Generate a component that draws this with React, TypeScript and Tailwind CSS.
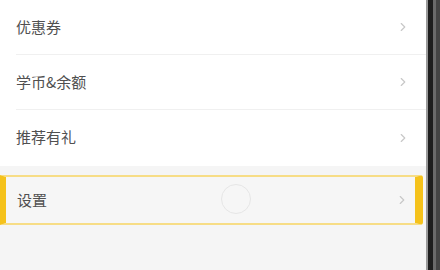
import { ChevronRight } from "lucide-react"

const items = ["优惠券", "学币&余额", "推荐有礼"]

function Row({ label, last }: { label: string; last?: boolean }) {
  return (
    <div className="pl-[16px]">
      <div
        className={`flex h-[55px] items-center justify-between pr-[16px] ${
          last ? "" : "border-b border-[#f0f0f0]"
        }`}
      >
        <span className="text-[15px] text-[#505050]">{label}</span>
        <ChevronRight className="h-[14px] w-[14px] text-[#c8c8c8]" strokeWidth={2} />
      </div>
    </div>
  )
}

export default function App() {
  return (
    <div
      className="flex h-[270px] w-[440px] overflow-hidden bg-[#f5f5f5]"
      style={{ fontFamily: '"Noto Sans CJK SC", "Noto Sans", sans-serif' }}
    >
      <div className="flex w-[426px] flex-col">
        {/* list */}
        <div className="bg-white pb-[1px]">
          {items.map((label, i) => (
            <Row key={label} label={label} last={i === items.length - 1} />
          ))}
        </div>

        {/* highlighted settings row */}
        <div className="mt-[9px] pr-[3px]">
          <div className="relative flex h-[50px] items-center justify-between rounded-r-[3px] border-y-2 border-l-[6px] border-r-[8px] border-y-[#f7dd86] border-l-[#f5c21b] border-r-[#f5c21b] bg-[#f6f6f6] pl-[11px] pr-[6px]">
            <span className="text-[15px] text-[#505050]">设置</span>
            <ChevronRight className="h-[14px] w-[14px] text-[#c8c8c8]" strokeWidth={2} />
            <div className="absolute left-[215px] top-[7px] h-[30px] w-[30px] rounded-full border border-[#e6e6e6]" />
          </div>
        </div>
      </div>

      {/* device edge */}
      <div className="flex flex-1">
        <div className="w-[2px] bg-[#9a9a9a]" />
        <div className="w-[5px] bg-[#1e1e1e]" />
        <div className="w-[3px] bg-[#6a6a6a]" />
        <div className="flex-1 bg-[#444444]" />
      </div>
    </div>
  )
}
